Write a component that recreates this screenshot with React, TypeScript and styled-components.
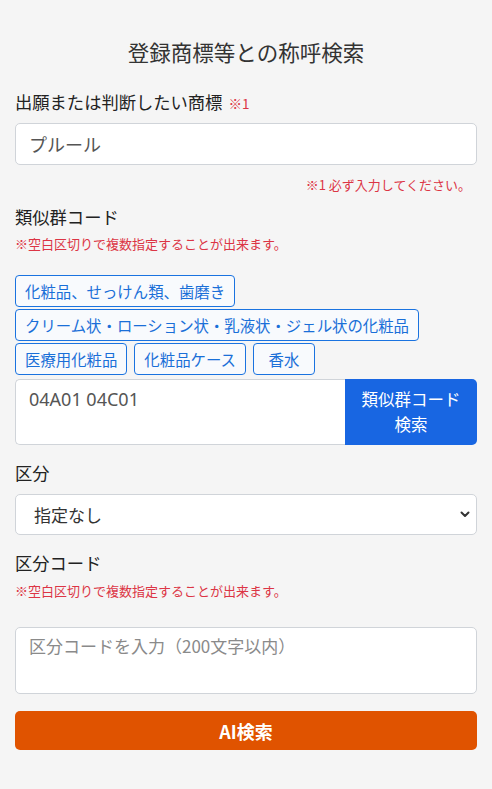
import React from "react";
import styled, { createGlobalStyle } from "styled-components";

const Global = createGlobalStyle`
  html, body { margin: 0; padding: 0; background: #f5f5f5; }
  body { font-family: "Noto Sans CJK JP", "Noto Sans", sans-serif; color: #212529; }
  * { box-sizing: border-box; }
`;

const Page = styled.div`
  display: flex;
  flex-direction: column;
  padding: 0 15px 39px;
  min-height: 789px;
`;

const Title = styled.h1`
  margin: 36px 0 0;
  font-size: 21.5px;
  line-height: 32px;
  font-weight: 400;
  text-align: center;
  color: #333;
`;

const Label = styled.div<{ $mt: number }>`
  margin-top: ${(p) => p.$mt}px;
  font-size: 17.3px;
  line-height: 24px;
  color: #222;
`;

const Req = styled.span`
  font-size: 13.5px;
  color: #dc3545;
  margin-left: 6px;
`;

const Note = styled.div<{ $mt: number; $right?: boolean }>`
  margin-top: ${(p) => p.$mt}px;
  font-size: 13px;
  line-height: 18px;
  color: #dc3545;
  text-align: ${(p) => (p.$right ? "right" : "left")};
  padding-right: ${(p) => (p.$right ? "6px" : "0")};
`;

const TextInput = styled.input`
  margin-top: 8px;
  height: 42px;
  width: 100%;
  border: 1px solid #d0d4d9;
  border-radius: 5px;
  background: #fff;
  padding: 0 13px;
  font-family: inherit;
  font-size: 18px;
  color: #555;
  outline: none;
`;

const Tags = styled.div`
  margin-top: 22px;
  display: flex;
  flex-wrap: wrap;
  column-gap: 7px;
  row-gap: 2px;
`;

const Tag = styled.button<{ $min?: number }>`
  height: 32px;
  min-width: ${(p) => p.$min ?? 0}px;
  padding: 0 9px;
  border: 1px solid #1a73e0;
  border-radius: 4px;
  background: #f8fafd;
  color: #1a6fd8;
  font-family: inherit;
  font-size: 15.4px;
  line-height: 30px;
  white-space: nowrap;
`;

const CodeRow = styled.div`
  margin-top: 4px;
  display: flex;
  height: 66px;
`;

const CodeArea = styled.textarea`
  flex: 1;
  border: 1px solid #d0d4d9;
  border-right: none;
  border-radius: 5px 0 0 5px;
  background: #fff;
  padding: 6px 13px;
  font-family: "Noto Sans", "Noto Sans CJK JP", sans-serif;
  font-size: 18px;
  line-height: 26px;
  color: #555;
  resize: none;
  outline: none;
`;

const SearchBtn = styled.button`
  width: 132px;
  border: none;
  border-radius: 0 5px 5px 0;
  background: #1866e2;
  color: #fff;
  font-family: inherit;
  font-size: 16.5px;
  line-height: 25px;
  padding: 0 4px;
`;

const SelectWrap = styled.div`
  position: relative;
  margin-top: 9px;
`;

const Select = styled.select`
  width: 100%;
  height: 41px;
  appearance: none;
  border: 1px solid #d0d4d9;
  border-radius: 5px;
  background: #fff;
  padding: 0 18px;
  font-family: inherit;
  font-size: 17px;
  color: #333;
  outline: none;
`;

const Chevron = styled.svg`
  position: absolute;
  right: 7px;
  top: 16px;
  width: 10px;
  height: 9px;
  pointer-events: none;
`;

const ClassArea = styled.textarea`
  margin-top: 27px;
  height: 67px;
  width: 100%;
  border: 1px solid #d0d4d9;
  border-radius: 5px;
  background: #fff;
  padding: 5px 13px;
  font-family: inherit;
  font-size: 17px;
  line-height: 26px;
  color: #555;
  resize: none;
  outline: none;
  &::placeholder { color: #8a8a8a; }
`;

const AiBtn = styled.button`
  margin-top: 17px;
  height: 39px;
  width: 100%;
  border: none;
  border-radius: 5px;
  background: #e05300;
  color: #fff;
  font-family: inherit;
  font-size: 18px;
  font-weight: 700;
`;

const tags: { label: string; min?: number }[] = [
  { label: "化粧品、せっけん類、歯磨き" },
  { label: "クリーム状・ローション状・乳液状・ジェル状の化粧品" },
  { label: "医療用化粧品" },
  { label: "化粧品ケース" },
  { label: "香水", min: 62 },
];

export default function App() {
  return (
    <>
      <Global />
      <Page>
        <Title>登録商標等との称呼検索</Title>
        <Label $mt={22}>
          出願または判断したい商標<Req>※1</Req>
        </Label>
        <TextInput defaultValue="プルール" />
        <Note $mt={11} $right>
          ※1 必ず入力してください。
        </Note>
        <Label $mt={11}>類似群コード</Label>
        <Note $mt={6}>※空白区切りで複数指定することが出来ます。</Note>
        <Tags>
          {tags.map((t) => (
            <Tag key={t.label} $min={t.min}>
              {t.label}
            </Tag>
          ))}
        </Tags>
        <CodeRow>
          <CodeArea defaultValue="04A01 04C01" />
          <SearchBtn>
            類似群コード
            <br />
            検索
          </SearchBtn>
        </CodeRow>
        <Label $mt={16}>区分</Label>
        <SelectWrap>
          <Select defaultValue="">
            <option value="">指定なし</option>
          </Select>
          <Chevron viewBox="0 0 10 9">
            <path d="M1.5 2.5 L5 6 L8.5 2.5" fill="none" stroke="#333" strokeWidth="2" strokeLinecap="round" strokeLinejoin="round" />
          </Chevron>
        </SelectWrap>
        <Label $mt={16}>区分コード</Label>
        <Note $mt={7}>※空白区切りで複数指定することが出来ます。</Note>
        <ClassArea placeholder="区分コードを入力（200文字以内）" />
        <AiBtn>AI検索</AiBtn>
      </Page>
    </>
  );
}
